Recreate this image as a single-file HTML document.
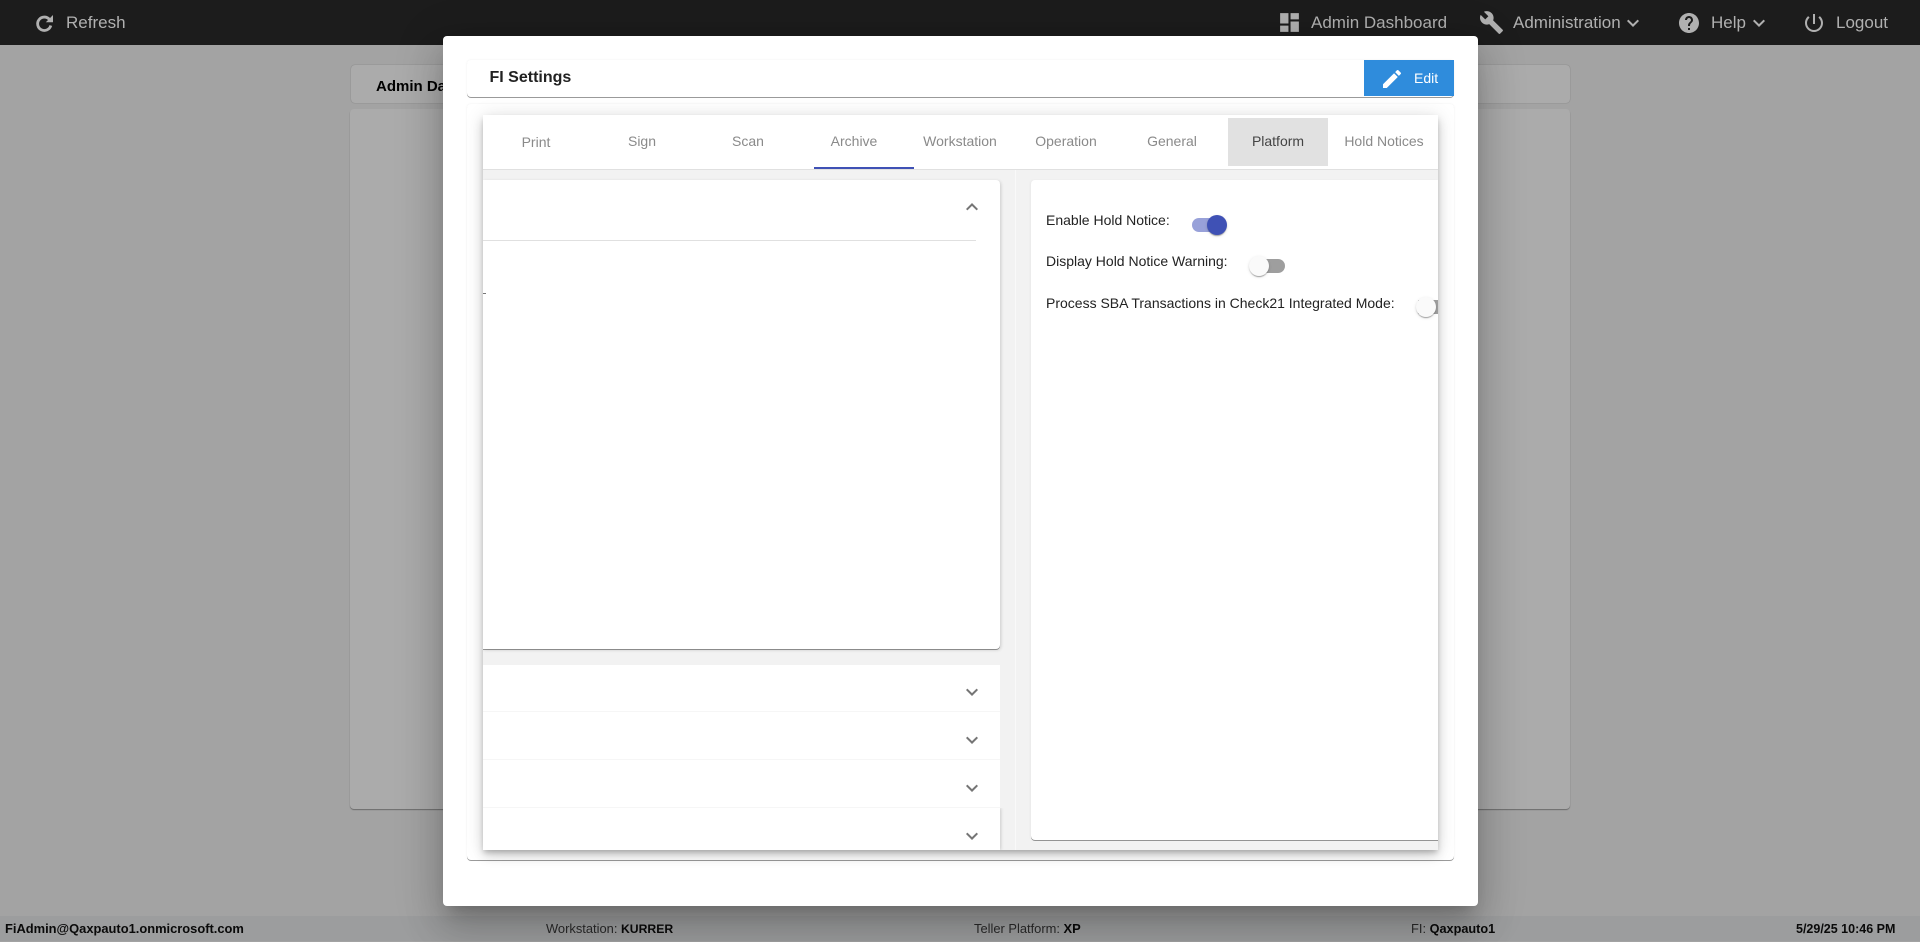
<!DOCTYPE html>
<html>
<head>
<meta charset="utf-8">
<title>FI Settings</title>
<style>
html,body{margin:0;padding:0;width:1920px;height:941px;overflow:hidden;background:#a3a3a3;font-family:"Liberation Sans",Arial,sans-serif;}
div,span,svg{box-sizing:border-box;}
.a{position:absolute;}
.t{position:absolute;white-space:nowrap;}
.nav{position:absolute;top:0;height:45px;line-height:45px;font-size:17px;color:#b0b0b0;white-space:nowrap;}
svg.i{position:absolute;fill:#b0b0b0;}
.tab{position:absolute;top:118px;width:100px;height:48px;line-height:46px;text-align:center;font-size:14px;color:#8a8a8a;}
.chev{position:absolute;left:960px;width:24px;height:24px;fill:#757575;}
.row{position:absolute;left:483px;width:517px;background:#fff;border-bottom:1px solid #f6f6f6;}
.lbl{position:absolute;left:1046px;font-size:14px;line-height:18px;color:#222;white-space:nowrap;}
.foot{position:absolute;top:916px;height:25px;line-height:25px;font-size:12.9px;color:#2a2a2a;white-space:nowrap;}
.foot b{color:#0a0a0a;}
.thumb{position:absolute;width:20px;height:20px;border-radius:50%;background:#fafafa;box-shadow:0 2px 1px -1px rgba(0,0,0,.2),0 1px 1px 0 rgba(0,0,0,.14),0 1px 3px 0 rgba(0,0,0,.12);}
</style>
</head>
<body>
<!-- page behind the dialog -->
<div class="a" style="left:0;top:916px;width:1920px;height:25px;background:#9c9d9e;"></div>
<div class="a" style="left:351px;top:65px;width:1219px;height:38px;background:#ababab;border-radius:4px;box-shadow:0 0 1px rgba(0,0,0,.35);"></div>
<div class="t" style="left:376px;top:66px;line-height:42px;font-size:15px;font-weight:bold;color:#000;">Admin Dashboard</div>
<div class="a" style="left:350px;top:109px;width:1220px;height:700px;background:#ababab;border-radius:4px;box-shadow:0 1px 1px rgba(0,0,0,.35);"></div>

<!-- header -->
<div class="a" style="left:0;top:0;width:1920px;height:45px;background:#1c1c1c;"></div>
<svg class="a" style="left:30px;top:11px;" width="24" height="24" viewBox="0 0 24 24"><path d="M19.5 8.5A6.7 6.7 0 1 0 20.8 14.5" fill="none" stroke="#b0b0b0" stroke-width="2.8"/><path d="M23 4v7.2h-7.2z" fill="#b0b0b0"/></svg>
<div class="nav" style="left:66px;">Refresh</div>
<svg class="i" style="left:1277px;top:10px;" width="25" height="25" viewBox="0 0 24 24"><path d="M3 13h8V3H3v10zm0 8h8v-6H3v6zm10 0h8V11h-8v10zm0-18v6h8V3h-8z"/></svg>
<div class="nav" style="left:1311px;">Admin Dashboard</div>
<svg class="i" style="left:1479px;top:10px;" width="25" height="25" viewBox="0 0 24 24"><path d="M22.7 19l-9.1-9.1c.9-2.3.4-5-1.5-6.9-2-2-5-2.4-7.4-1.3L9 6 6 9 1.6 4.7C.4 7.1.9 10.1 2.9 12.1c1.9 1.9 4.6 2.4 6.9 1.5l9.1 9.1c.4.4 1 .4 1.4 0l2.3-2.3c.5-.4.5-1.1.1-1.4z"/></svg>
<div class="nav" style="left:1513px;">Administration</div>
<svg class="i" style="left:1621px;top:11px;" width="24" height="24" viewBox="0 0 24 24"><path d="M16.59 8.59L12 13.17 7.41 8.59 6 10l6 6 6-6z"/></svg>
<svg class="i" style="left:1677px;top:11px;" width="24" height="24" viewBox="0 0 24 24"><path d="M12 2C6.48 2 2 6.48 2 12s4.48 10 10 10 10-4.48 10-10S17.52 2 12 2zm1 17h-2v-2h2v2zm2.07-7.75l-.9.92C13.45 12.9 13 13.5 13 15h-2v-.5c0-1.1.45-2.1 1.17-2.83l1.24-1.26c.37-.36.59-.86.59-1.41 0-1.1-.9-2-2-2s-2 .9-2 2H8c0-2.21 1.79-4 4-4s4 1.79 4 4c0 .88-.36 1.68-.93 2.25z"/></svg>
<div class="nav" style="left:1711px;">Help</div>
<svg class="i" style="left:1747px;top:11px;" width="24" height="24" viewBox="0 0 24 24"><path d="M16.59 8.59L12 13.17 7.41 8.59 6 10l6 6 6-6z"/></svg>
<svg class="i" style="left:1802px;top:11px;" width="24" height="24" viewBox="0 0 24 24"><path d="M13 3h-2v10h2V3zm4.83 2.17l-1.42 1.42C17.99 7.86 19 9.81 19 12c0 3.87-3.13 7-7 7s-7-3.13-7-7c0-2.19 1.01-4.14 2.58-5.42L6.17 5.17C4.23 6.82 3 9.26 3 12c0 4.97 4.03 9 9 9s9-4.03 9-9c0-2.74-1.23-5.18-3.17-6.83z"/></svg>
<div class="nav" style="left:1836px;">Logout</div>

<!-- footer text -->
<div class="foot" style="left:5px;"><b>FiAdmin@Qaxpauto1.onmicrosoft.com</b></div>
<div class="foot" style="left:546px;">Workstation: <b style="font-size:12.2px;">KURRER</b></div>
<div class="foot" style="left:974px;">Teller Platform: <b>XP</b></div>
<div class="foot" style="left:1411px;">FI: <b style="font-size:12.7px;">Qaxpauto1</b></div>
<div class="foot" style="left:1796px;"><b style="font-size:12.5px;">5/29/25 10:46 PM</b></div>

<!-- dialog -->
<div class="a" style="left:443px;top:36px;width:1035px;height:870px;background:#fff;border-radius:4px;box-shadow:0 11px 15px -7px rgba(0,0,0,.2),0 24px 38px 3px rgba(0,0,0,.14),0 9px 46px 8px rgba(0,0,0,.12);"></div>

<!-- title card -->
<div class="a" style="left:467px;top:60px;width:987px;height:37px;background:#fff;border-radius:4px;box-shadow:0 1px 0 rgba(0,0,0,.38),0 0 2px rgba(0,0,0,.07);"></div>
<div class="t" style="left:489.5px;top:60px;line-height:36px;font-size:16px;font-weight:bold;color:#222;">FI Settings</div>
<div class="a" style="left:1364px;top:60px;width:90px;height:36px;background:#2f8cdc;"></div>
<svg class="a" style="left:1380px;top:67px;fill:#fff;" width="24" height="24" viewBox="0 0 24 24"><path d="M3 17.25V21h3.75L17.81 9.94l-3.75-3.75L3 17.25zM20.71 7.04c.39-.39.39-1.02 0-1.41l-2.34-2.34c-.39-.39-1.02-.39-1.41 0l-1.83 1.83 3.75 3.75 1.83-1.83z"/></svg>
<div class="t" style="left:1414px;top:60px;line-height:37px;font-size:14px;color:#fff;">Edit</div>

<!-- content card -->
<div class="a" style="left:467px;top:104px;width:987px;height:756px;background:#fff;border-radius:4px;box-shadow:0 1px 0 rgba(0,0,0,.38),0 0 2px rgba(0,0,0,.07);"></div>

<!-- tabs panel -->
<div class="a" style="left:483px;top:115px;width:955px;height:735px;background:#f2f2f2;box-shadow:0 3px 5px -1px rgba(0,0,0,.2),0 6px 10px 0 rgba(0,0,0,.14),0 1px 18px 0 rgba(0,0,0,.12);"></div>
<div class="a" style="left:1015px;top:170px;width:1px;height:680px;background:#f9f9f9;"></div>
<div class="a" style="left:483px;top:115px;width:955px;height:55px;background:#fff;border-bottom:1px solid #e0e0e0;"></div>
<div class="a" style="left:1228px;top:118px;width:100px;height:48px;background:#e1e1e1;"></div>
<div class="a" style="left:814px;top:167px;width:100px;height:2px;background:#3f51b5;"></div>
<div class="tab" style="left:486px;line-height:48px;">Print</div>
<div class="tab" style="left:592px;">Sign</div>
<div class="tab" style="left:698px;">Scan</div>
<div class="tab" style="left:804px;">Archive</div>
<div class="tab" style="left:910px;">Workstation</div>
<div class="tab" style="left:1016px;">Operation</div>
<div class="tab" style="left:1122px;">General</div>
<div class="tab" style="left:1228px;color:#444;">Platform</div>
<div class="tab" style="left:1334px;">Hold Notices</div>

<!-- left panels -->
<div class="a" style="left:483px;top:180px;width:517px;height:469px;background:#fff;border-radius:0 4px 4px 0;box-shadow:0 1px 0 rgba(0,0,0,.36),1px 1px 3px rgba(0,0,0,.16);clip-path:inset(-6px -6px -6px 0);"></div>
<div class="a" style="left:483px;top:240px;width:493px;height:1px;background:#e0e0e0;"></div>
<div class="a" style="left:483px;top:293px;width:3px;height:1px;background:#777;"></div>
<svg class="chev" style="top:195px;" viewBox="0 0 24 24"><path d="M7.41 15.41L12 10.83l4.59 4.58L18 14l-6-6-6 6z"/></svg>

<div class="row" style="top:665px;height:47px;"></div>
<div class="row" style="top:712px;height:48px;"></div>
<div class="row" style="top:760px;height:48px;"></div>
<div class="row" style="top:808px;height:42px;border:0;box-shadow:1px 0 3px rgba(0,0,0,.16);clip-path:inset(0 -6px 0 0);"></div>
<svg class="chev" style="top:680px;" viewBox="0 0 24 24"><path d="M16.59 8.59L12 13.17 7.41 8.59 6 10l6 6 6-6z"/></svg>
<svg class="chev" style="top:728px;" viewBox="0 0 24 24"><path d="M16.59 8.59L12 13.17 7.41 8.59 6 10l6 6 6-6z"/></svg>
<svg class="chev" style="top:776px;" viewBox="0 0 24 24"><path d="M16.59 8.59L12 13.17 7.41 8.59 6 10l6 6 6-6z"/></svg>
<svg class="chev" style="top:824px;" viewBox="0 0 24 24"><path d="M16.59 8.59L12 13.17 7.41 8.59 6 10l6 6 6-6z"/></svg>

<!-- right panel -->
<div class="a" style="left:1031px;top:180px;width:407px;height:660px;background:#fff;border-radius:4px 0 0 4px;box-shadow:0 1px 0 rgba(0,0,0,.38),-1px 0 2px rgba(0,0,0,.04);clip-path:inset(-4px 0 -4px -4px);"></div>
<div class="lbl" style="left:1046px;top:211px;">Enable Hold Notice:</div>
<div class="a" style="left:1192px;top:218px;width:33px;height:14px;border-radius:7px;background:#98a1d9;"></div>
<div class="thumb" style="left:1207px;top:215px;background:#3f51b5;"></div>
<div class="lbl" style="left:1046px;top:252px;">Display Hold Notice Warning:</div>
<div class="a" style="left:1251px;top:259px;width:34px;height:14px;border-radius:7px;background:#9e9e9e;"></div>
<div class="thumb" style="left:1249px;top:256px;"></div>
<div class="lbl" style="left:1046px;top:294px;">Process SBA Transactions in Check21 Integrated Mode:</div>
<div class="a" style="left:1418px;top:300px;width:20px;height:14px;background:#9e9e9e;"></div>
<div class="thumb" style="left:1416px;top:297px;"></div>
</body>
</html>
